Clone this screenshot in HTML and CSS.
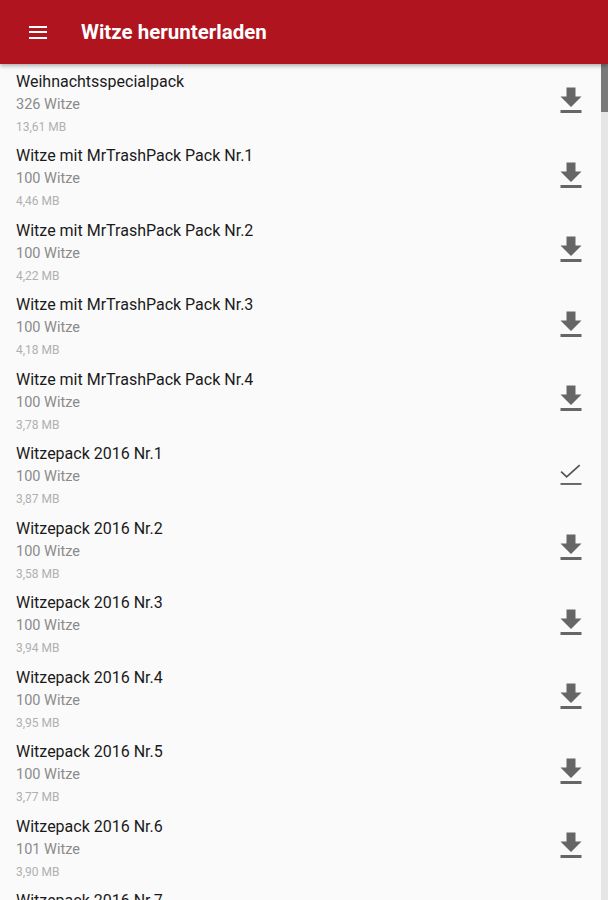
FILE: index.html
```html
<!DOCTYPE html>
<html lang="de">
<head>
    <meta charset="UTF-8">
    <meta name="viewport" content="width=device-width, initial-scale=1.0">
    <title>Witze herunterladen</title>
    <link rel="stylesheet" href="styles.css">
</head>
<body>

<div class="app">
    <!-- Toolbar -->
    <header class="toolbar">
        <div class="menu-btn">
            <span></span><span></span><span></span>
        </div>
        <h1>Witze herunterladen</h1>
    </header>

    <div class="content">
        <ul class="pack-list" id="packList"></ul>
        <div class="scrollbar"><div class="thumb"></div></div>
    </div>
</div>

<script>
    const packs = [
        ["Weihnachtsspecialpack", 326, "13,61 MB", false],
        ["Witze mit MrTrashPack Pack Nr.1", 100, "4,46 MB", false],
        ["Witze mit MrTrashPack Pack Nr.2", 100, "4,22 MB", false],
        ["Witze mit MrTrashPack Pack Nr.3", 100, "4,18 MB", false],
        ["Witze mit MrTrashPack Pack Nr.4", 100, "3,78 MB", false],
        ["Witzepack 2016 Nr.1", 100, "3,87 MB", true],
        ["Witzepack 2016 Nr.2", 100, "3,58 MB", false],
        ["Witzepack 2016 Nr.3", 100, "3,94 MB", false],
        ["Witzepack 2016 Nr.4", 100, "3,95 MB", false],
        ["Witzepack 2016 Nr.5", 100, "3,77 MB", false],
        ["Witzepack 2016 Nr.6", 101, "3,90 MB", false],
        ["Witzepack 2016 Nr.7", 100, "3,81 MB", false]
    ];

    const downloadIcon = `<svg viewBox="0 0 24 24" width="36" height="36"><path d="M19 9h-4V3H9v6H5l7 7 7-7zM5 18v2h14v-2H5z"/></svg>`;
    const doneIcon = `<svg viewBox="0 0 24 24" width="36" height="36"><path d="M5.4 10.4l3.7 3.5l8.7-7.8" fill="none"/><path d="M5 18v1.3h14V18H5z"/></svg>`;

    let list = document.getElementById("packList");
    packs.forEach(p => {
        list.innerHTML += `<li class="pack">
            <div class="pack-info">
                <div class="pack-title">${p[0]}</div>
                <div class="pack-count">${p[1]} Witze</div>
                <div class="pack-size">${p[2]}</div>
            </div>
            <div class="pack-action ${p[3] ? "done" : ""}">${p[3] ? doneIcon : downloadIcon}</div>
        </li>`;
    });
</script>

</body>
</html>
```

FILE: styles.css
```css
/* General Reset */
* {
    margin: 0;
    padding: 0;
    box-sizing: border-box;
    font-family: Roboto, 'Noto Sans', sans-serif;
}

body {
    background: #fafafa;
    width: 608px;
    height: 900px;
    overflow: hidden;
}

.app {
    display: flex;
    flex-direction: column;
    height: 900px;
}

/* Toolbar */
.toolbar {
    height: 64px;
    flex-shrink: 0;
    background: #b0141f;
    display: flex;
    align-items: center;
    padding-left: 29px;
    position: relative;
    z-index: 2;
    box-shadow: 0px 2px 4px rgba(0, 0, 0, 0.3);
}

.menu-btn {
    width: 18px;
    display: flex;
    flex-direction: column;
    gap: 3.5px;
    margin-right: 34px;
}

.menu-btn span {
    display: block;
    height: 2px;
    background: #ffffff;
}

.toolbar h1 {
    color: #ffffff;
    font-size: 20.5px;
    font-weight: bold;
}

/* List */
.content {
    flex: 1;
    display: flex;
    min-height: 0;
}

.pack-list {
    list-style: none;
    flex: 1;
    overflow: hidden;
}

.pack {
    height: 74.5px;
    display: flex;
    align-items: center;
    justify-content: space-between;
    padding-left: 16px;
    padding-right: 12px;
}

.pack-info {
    display: flex;
    flex-direction: column;
    padding-top: 4px;
}

.pack-title {
    font-size: 16px;
    line-height: 20px;
    color: #1a1a1a;
}

.pack-count {
    font-size: 14.5px;
    line-height: 18px;
    margin-top: 4px;
    color: #8a8a8a;
}

.pack-size {
    font-size: 12px;
    line-height: 16px;
    margin-top: 5px;
    color: #b0b0b0;
}

.pack-action svg {
    display: block;
    fill: #666666;
}

.pack-action.done svg path:first-child {
    stroke: #555555;
    stroke-width: 1.2;
    fill: none;
}

/* Scrollbar */
.scrollbar {
    width: 7px;
    background: #e6e6e6;
    flex-shrink: 0;
}

.thumb {
    height: 48px;
    background: #7a7a7a;
}
```
